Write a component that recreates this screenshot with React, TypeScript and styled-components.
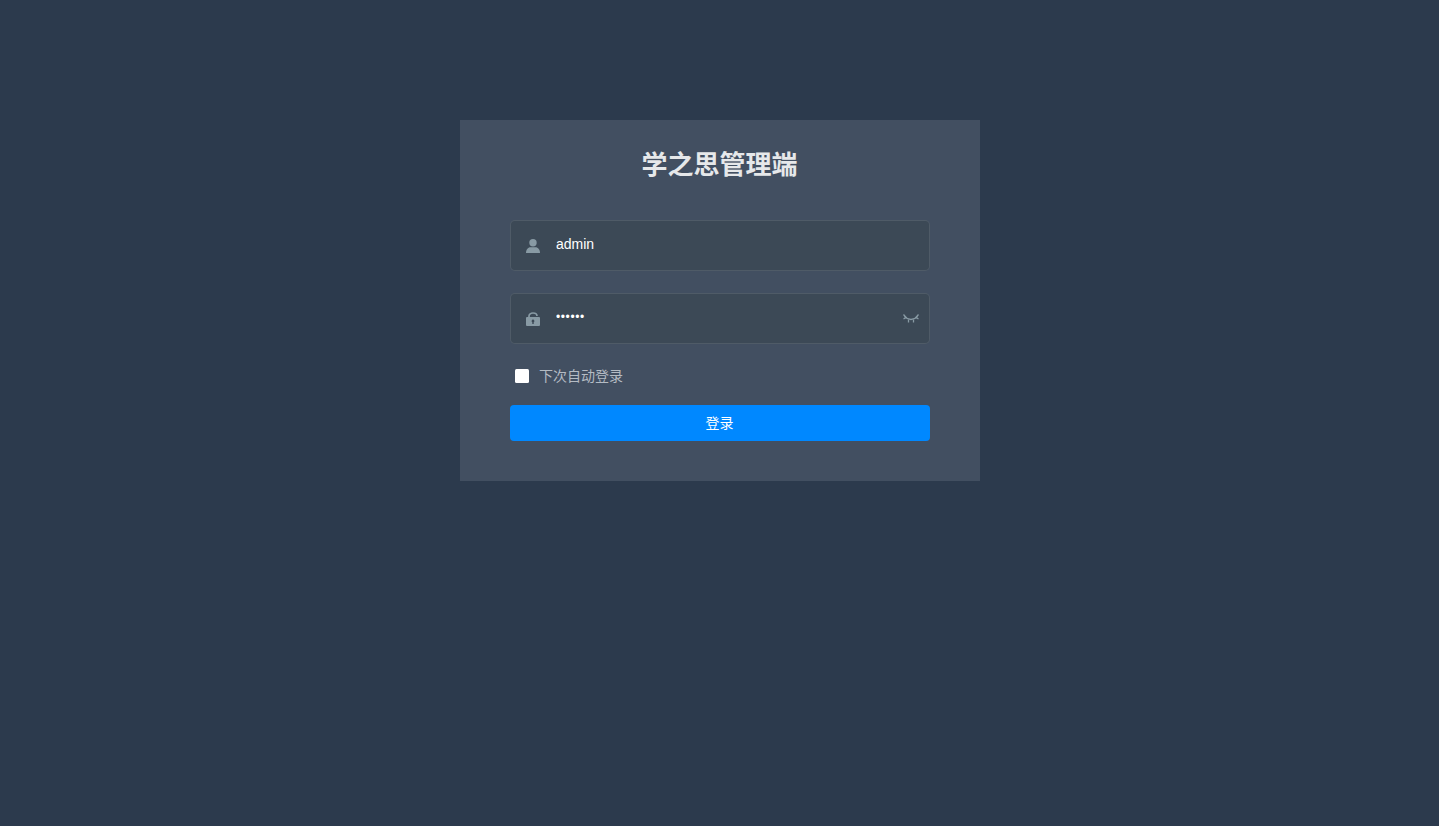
import styled, { createGlobalStyle } from "styled-components";

const GlobalStyle = createGlobalStyle`
  html, body {
    margin: 0;
    height: 100%;
    background-color: #2c3a4d;
  }
  * {
    box-sizing: border-box;
  }
`;

const UserIcon = () => (
  <svg width="14" height="14" viewBox="0 0 14 14" fill="#889aa4">
    <ellipse cx="7" cy="3.700" rx="3.700" ry="3.700" />
    <path d="M0 14c0-3.200 1.800-5.800 4.600-5.800h4.800C12.200 8.200 14 10.800 14 14z" />
  </svg>
);

const LockIcon = () => (
  <svg width="14" height="14" viewBox="0 0 14 14" fill="none">
    <path d="M3 5.500V4C3 2.200 4.700 1 7 1s4 1.200 4 3" stroke="#889aa4" strokeWidth="1.700" />
    <path
      fillRule="evenodd"
      d="M1 5h12a1 1 0 0 1 1 1v7a1 1 0 0 1-1 1H1a1 1 0 0 1-1-1V6a1 1 0 0 1 1-1zm6 2.600a1.400 1.400 0 0 0-.7 2.600V12h1.400v-1.800A1.400 1.400 0 0 0 7 7.600z"
      fill="#889aa4"
    />
  </svg>
);

const EyeClosedIcon = () => (
  <svg width="16" height="9" viewBox="0 0 16 9" fill="none" stroke="#889aa4" strokeWidth="1.300">
    <path d="M1.500 2.500c2 2 4 3 6.500 3s4.500-1 6.500-3" />
    <path d="M0.500 0.500l3 3.500M15.500 0.500l-3 3.500M5.500 5.500V8.500M10.500 5.500V8.500M0.500 5l2.500-1.500M15.500 5L13 3.500" />
  </svg>
);

const App = () => {
  return (
    <Page>
      <GlobalStyle />
      <LoginCard>
        <Title>学之思管理端</Title>
        <Field>
          <FieldIcon>
            <UserIcon />
          </FieldIcon>
          <FieldInput type="text" defaultValue="admin" />
        </Field>
        <Field>
          <FieldIcon>
            <LockIcon />
          </FieldIcon>
          <FieldInput $masked type="password" defaultValue="123456" />
          <EyeToggle>
            <EyeClosedIcon />
          </EyeToggle>
        </Field>
        <RememberRow>
          <RememberBox type="checkbox" />
          <RememberText>下次自动登录</RememberText>
        </RememberRow>
        <LoginButton type="button">登录</LoginButton>
      </LoginCard>
    </Page>
  );
};

export default App;

const Page = styled.div`
  min-height: 826px;
  padding-top: 120px;
  background-color: #2c3a4d;
  font-family: "Liberation Sans", "Noto Sans CJK SC", sans-serif;
`;

const LoginCard = styled.form`
  width: 520px;
  height: 361px;
  margin: 0 auto;
  padding: 28px 50px 0;
  background-color: #424f61;
`;

const Title = styled.h3`
  margin: 0 0 36px;
  height: 36px;
  line-height: 35px;
  text-align: center;
  font-size: 26px;
  font-weight: 700;
  color: #e6e8ea;
`;

const Field = styled.div`
  display: flex;
  align-items: center;
  height: 51px;
  margin-bottom: 22px;
  border: 1px solid rgba(255, 255, 255, 0.1);
  border-radius: 5px;
  background-color: #3c4956;
`;

const FieldIcon = styled.span`
  display: flex;
  justify-content: center;
  width: 30px;
  margin-left: 7px;
`;

const FieldInput = styled.input<{ $masked?: boolean }>`
  flex: 1;
  min-width: 0;
  height: 47px;
  padding: 0 5px 4px;
  margin-left: 3.500px;
  border: 0;
  outline: none;
  background: transparent;
  font-family: inherit;
  font-size: ${(p) => (p.$masked ? "12px" : "14px")};
  letter-spacing: ${(p) => (p.$masked ? "0.6px" : "normal")};
  color: #ffffff;
`;

const EyeToggle = styled.span`
  display: flex;
  margin-right: 10px;
`;

const RememberRow = styled.label`
  display: flex;
  align-items: center;
  height: 20px;
  margin-top: -1px;
  padding-left: 5px;
`;

const RememberBox = styled.input`
  appearance: none;
  width: 14px;
  height: 14px;
  margin: 2px 10.500px 0 0;
  border-radius: 1.500px;
  background-color: #ffffff;
`;

const RememberText = styled.span`
  font-size: 14px;
  color: #b4bbc3;
`;

const LoginButton = styled.button`
  display: block;
  width: 100%;
  height: 36px;
  margin-top: 20px;
  padding: 0 0 2px;
  border: 0;
  border-radius: 4px;
  background-color: #0088ff;
  font-family: inherit;
  font-size: 14px;
  color: #ffffff;
`;
